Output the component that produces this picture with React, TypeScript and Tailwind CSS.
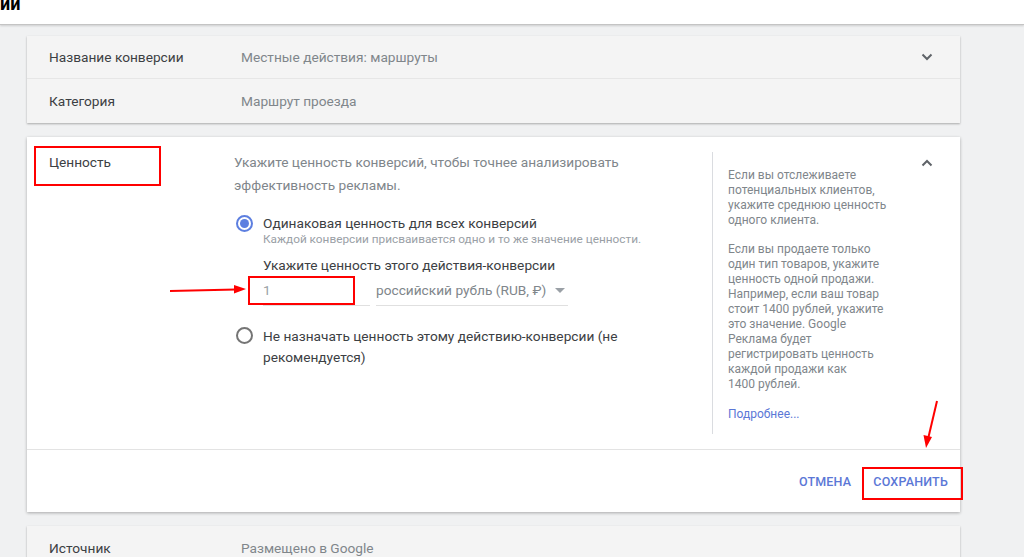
import React from "react";

const Chevron = ({ up }: { up?: boolean }) => (
  <svg width="12" height="8" viewBox="0 0 12 8" className="block">
    <path
      d={up ? "M1.5 6.5 L6 2 L10.5 6.5" : "M1.5 1.5 L6 6 L10.5 1.5"}
      fill="none"
      stroke="#5f6368"
      strokeWidth="2"
    />
  </svg>
);

export default function App() {
  return (
    <div
      className="w-[1024px] h-[557px] overflow-hidden bg-[#f0f1f2] relative"
      style={{ fontFamily: "Roboto, 'Noto Sans', sans-serif" }}
    >
      {/* header */}
      <div className="h-[25px] bg-white border-b border-[#c4c4c4] shadow-[0_1px_2px_rgba(0,0,0,0.15)] overflow-hidden">
        <div className="text-[18px] font-bold leading-[18px] text-black -mt-[5px]">ии</div>
      </div>

      <div className="pl-[27px] w-[960px]">
        {/* card 1 */}
        <div className="mt-[11px] bg-[#f4f4f4] shadow-[0_1px_2px_rgba(0,0,0,0.3)]">
          <div className="h-[43px] flex items-center border-b border-[#e6e6e6]">
            <div className="w-[214px] pl-[22px] text-[13.7px] text-[#3c4043]">Название конверсии</div>
            <div className="flex-1 text-[13.7px] text-[#80868b]">Местные действия: маршруты</div>
            <div className="pr-[27px]"><Chevron /></div>
          </div>
          <div className="h-[44px] flex items-center">
            <div className="w-[214px] pl-[22px] text-[13.7px] text-[#3c4043]">Категория</div>
            <div className="flex-1 text-[13.7px] text-[#80868b]">Маршрут проезда</div>
          </div>
        </div>

        {/* card 2 */}
        <div className="mt-[14px] bg-white shadow-[0_1px_3px_rgba(0,0,0,0.3)] h-[375px] flex flex-col">
          <div className="flex h-[313px] border-b border-[#e3e3e3]">
            <div className="w-[207px] pl-[22px] pt-[15px] relative">
              <div className="text-[13.7px] leading-[20px] text-[#3c4043]">Ценность</div>
              <div className="absolute left-[7px] top-[9px] w-[127px] h-[40px] border-2 border-[#ff0000]" />
            </div>
            <div className="w-[478px] pt-[14px] relative">
              <div className="text-[13.7px] leading-[23px] text-[#80868b]">
                Укажите ценность конверсий, чтобы точнее анализировать
                <br />
                эффективность рекламы.
              </div>
              <div className="mt-[17px] flex">
                <div className="w-[29px] pl-[2px] pt-[1px]">
                  <div className="w-[17px] h-[17px] rounded-full border-2 border-[#5d7fe0] flex items-center justify-center">
                    <div className="w-[9px] h-[9px] rounded-full bg-[#5d7fe0]" />
                  </div>
                </div>
                <div>
                  <div className="text-[13.7px] leading-[18px] text-[#3c4043]">Одинаковая ценность для всех конверсий</div>
                  <div className="text-[11.8px] leading-[15px] text-[#9aa0a6]">Каждой конверсии присваивается одно и то же значение ценности.</div>
                  <div className="mt-[9px] text-[13.7px] leading-[18px] text-[#3c4043]">Укажите ценность этого действия-конверсии</div>
                  <div className="mt-[2px] flex gap-[6px]">
                    <div className="relative w-[107px] h-[30px] border-b border-[#e0e0e0] text-[13.7px] text-[#9aa0a6] flex items-center">
                      1
                      <div className="absolute -left-[15px] top-[0px] w-[107px] h-[29px] border-2 border-[#ff0000]" />
                    </div>
                    <div className="w-[192px] h-[30px] border-b border-[#e0e0e0] flex items-center text-[13.7px] text-[#80868b]">
                      российский рубль (RUB, ₽)
                      <svg width="10" height="5" viewBox="0 0 10 5" className="ml-[9px]">
                        <path d="M0 0 L10 0 L5 5 Z" fill="#9aa0a6" />
                      </svg>
                    </div>
                  </div>
                </div>
              </div>
              <div className="mt-[20px] flex">
                <div className="w-[29px] pl-[2px] pt-[1px]">
                  <div className="w-[17px] h-[17px] rounded-full border-2 border-[#757575]" />
                </div>
                <div className="w-[380px] text-[13.7px] leading-[21px] text-[#3c4043]">
                  Не назначать ценность этому действию-конверсии (не
                  <br />
                  рекомендуется)
                </div>
              </div>
            </div>
            <div className="mt-[15px] h-[282px] border-l border-[#dadce0] pl-[15px] pt-[16px] w-[209px] text-[12px] leading-[15px] text-[#80868b]">
              <p>
                Если вы отслеживаете
                <br />
                потенциальных клиентов,
                <br />
                укажите среднюю ценность
                <br />
                одного клиента.
              </p>
              <p className="mt-[14px]">
                Если вы продаете только
                <br />
                один тип товаров, укажите
                <br />
                ценность одной продажи.
                <br />
                Например, если ваш товар
                <br />
                стоит 1400 рублей, укажите
                <br />
                это значение. Google
                <br />
                Реклама будет
                <br />
                регистрировать ценность
                <br />
                каждой продажи как
                <br />
                1400 рублей.
              </p>
              <p className="mt-[15px] text-[#5b77d6]">Подробнее...</p>
            </div>
            <div className="flex-1 flex justify-end pr-[27px] pt-[22px]">
              <Chevron up />
            </div>
          </div>
          <div className="flex-1 flex items-center justify-end pr-[12px] gap-[22px] pt-[3px]">
            <div className="text-[12.5px] font-medium tracking-[0.2px] text-[#5b77d6]">ОТМЕНА</div>
            <div className="relative text-[12.5px] font-medium tracking-[0.2px] text-[#5b77d6]">
              СОХРАНИТЬ
              <div className="absolute -left-[11px] -right-[15px] -top-[6px] -bottom-[8px] border-2 border-[#ff0000]" />
            </div>
          </div>
        </div>

        {/* card 3 */}
        <div className="mt-[14px] bg-[#f4f4f4] shadow-[0_1px_2px_rgba(0,0,0,0.3)] h-[60px] flex items-start pt-[12px]">
          <div className="w-[214px] pl-[22px] text-[13.7px] leading-[20px] text-[#3c4043]">Источник</div>
          <div className="flex-1 text-[13.7px] leading-[20px] text-[#80868b]">Размещено в Google</div>
        </div>
      </div>

      {/* red arrows */}
      <svg className="absolute left-0 top-0 pointer-events-none" width="1024" height="557">
        <line x1="170" y1="291" x2="236" y2="289.5" stroke="#ff0000" strokeWidth="2" />
        <polygon points="246,289 234,285 234,293.5" fill="#ff0000" />
        <line x1="937" y1="401" x2="928.5" y2="437" stroke="#ff0000" strokeWidth="2" />
        <polygon points="926,448 923.5,435 932,437" fill="#ff0000" />
      </svg>
    </div>
  );
}
